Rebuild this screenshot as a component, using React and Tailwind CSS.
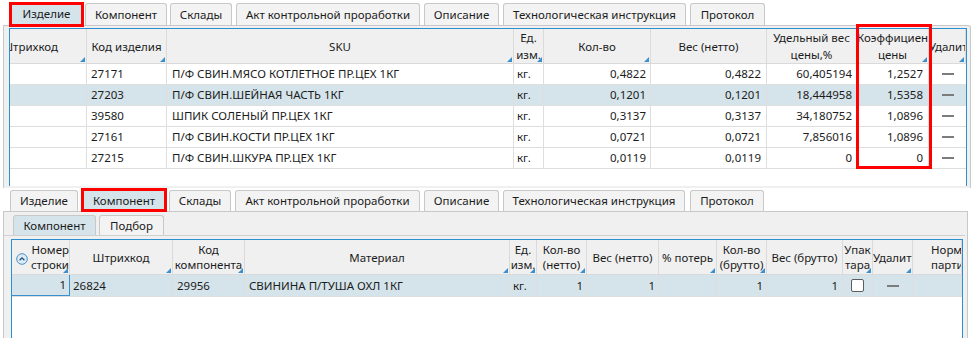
import React from 'react';

const topTabs = [
  { label: 'Изделие', cls: 'ml-[9px] w-[75px] h-[23px]', sel: true },
  { label: 'Компонент', cls: 'ml-[1px] w-[82px] h-[22px]' },
  { label: 'Склады', cls: 'ml-[3px] w-[62px] h-[22px]' },
  { label: 'Акт контрольной проработки', cls: 'ml-[4px] w-[184px] h-[22px]' },
  { label: 'Описание', cls: 'ml-[4px] w-[75px] h-[22px]' },
  { label: 'Технологическая инструкция', cls: 'ml-[4px] w-[183px] h-[22px]' },
  { label: 'Протокол', cls: 'ml-[4px] w-[75px] h-[22px]' },
];

const bottomTabs = [
  { label: 'Изделие', cls: 'ml-[10px] w-[68px] h-[21px]' },
  { label: 'Компонент', cls: 'ml-[3px] w-[86px] h-[22px]', sel: true },
  { label: 'Склады', cls: 'ml-[2px] w-[62px] h-[21px]' },
  { label: 'Акт контрольной проработки', cls: 'ml-[4px] w-[185px] h-[21px]' },
  { label: 'Описание', cls: 'ml-[4px] w-[75px] h-[21px]' },
  { label: 'Технологическая инструкция', cls: 'ml-[4px] w-[182px] h-[21px]' },
  { label: 'Протокол', cls: 'ml-[5px] w-[74px] h-[21px]' },
];

// колонки верхней таблицы
const topCols = [
  { w: 'w-[77px]', lines: ['Штрихкод'], tri: true, hcls: 'justify-end pr-[28px]' },
  { w: 'w-[80px]', lines: ['Код изделия'], tri: true },
  { w: 'w-[347px]', lines: ['SKU'], tri: true },
  { w: 'w-[30px]', lines: ['Ед.', 'изм.'], tri: true },
  { w: 'w-[107px]', lines: ['Кол-во'], tri: true },
  { w: 'w-[116px]', lines: ['Вес (нетто)'] },
  { w: 'w-[90px]', lines: ['Удельный вес', 'цены,%'] },
  { w: 'w-[72px]', lines: ['Коэффициент', 'цены'], tri: true },
  { w: 'w-[37px]', lines: ['Удалить'], tri: true },
];

const topRows = [
  ['27171', 'П/Ф СВИН.МЯСО КОТЛЕТНОЕ ПР.ЦЕХ 1КГ', '0,4822', '0,4822', '60,405194', '1,2527'],
  ['27203', 'П/Ф СВИН.ШЕЙНАЯ ЧАСТЬ 1КГ', '0,1201', '0,1201', '18,444958', '1,5358'],
  ['39580', 'ШПИК СОЛЕНЫЙ ПР.ЦЕХ 1КГ', '0,3137', '0,3137', '34,180752', '1,0896'],
  ['27161', 'П/Ф СВИН.КОСТИ ПР.ЦЕХ 1КГ', '0,0721', '0,0721', '7,856016', '1,0896'],
  ['27215', 'П/Ф СВИН.ШКУРА ПР.ЦЕХ 1КГ', '0,0119', '0,0119', '0', '0'],
];

const botCols = [
  { w: 'w-[58px]', lines: ['Номер', 'строки'], tri: true, sort: true },
  { w: 'w-[103px]', lines: ['Штрихкод'], tri: true },
  { w: 'w-[72px]', lines: ['Код', 'компонента'], tri: true },
  { w: 'w-[265px]', lines: ['Материал'], tri: true },
  { w: 'w-[27px]', lines: ['Ед.', 'изм.'], tri: true },
  { w: 'w-[50px]', lines: ['Кол-во', '(нетто)'], tri: true },
  { w: 'w-[72px]', lines: ['Вес (нетто)'] },
  { w: 'w-[58px]', lines: ['% потерь'], tri: true },
  { w: 'w-[50px]', lines: ['Кол-во', '(брутто)'], tri: true },
  { w: 'w-[76px]', lines: ['Вес (брутто)'] },
  { w: 'w-[30px]', lines: ['Упак', 'тара'], tri: true },
  { w: 'w-[40px]', lines: ['Удалить'], tri: true },
  { w: 'w-[49px]', lines: ['Норматив', 'партии'], hcls: 'justify-start pl-[18px]' },
];

function Tab({ label, cls, sel }) {
  return (
    <div
      className={`${cls} shrink-0 flex items-center justify-center border border-b-0 border-[#c8c8c8] rounded-t-[3px] whitespace-nowrap ${
        sel ? 'bg-[#d5e4ea]' : 'bg-[#f3f3f3]'
      }`}
    >
      {label}
    </div>
  );
}

function Tri() {
  return (
    <svg width="5" height="5" viewBox="0 0 5 5" className="absolute right-[1px] bottom-[1px]">
      <polygon points="5,0 5,5 0,5" fill="#3a8fcf" />
    </svg>
  );
}

function SortIcon() {
  return (
    <svg width="12" height="12" viewBox="0 0 12 12" className="absolute left-[4px] top-[13px]">
      <circle cx="6" cy="6" r="5.3" fill="#dcebf6" stroke="#4b8fc6" strokeWidth="1" />
      <path d="M3.6 7.2 L6 4.8 L8.4 7.2" fill="none" stroke="#1f4f78" strokeWidth="1.3" />
    </svg>
  );
}

function HeadCell({ c, lh }) {
  return (
    <div
      className={`${c.w} relative shrink-0 h-full border-r border-[#dadada] overflow-hidden flex items-center ${
        c.hcls || 'justify-center'
      }`}
    >
      {c.sort && <SortIcon />}
      <div
        className={`${lh} whitespace-nowrap ${c.hcls ? 'shrink-0' : 'w-full'} ${
          c.sort ? 'pl-[16px] text-right' : c.hcls ? 'text-left' : 'text-center'
        }`}
      >
        {c.lines.map((l) => (
          <div key={l}>{l}</div>
        ))}
      </div>
      {c.tri && <Tri />}
    </div>
  );
}

function Minus() {
  return <div className="w-[12px] h-[2px] bg-[#7c7c7c]" />;
}

export default function App() {
  return (
    <div className="w-[976px] h-[338px] overflow-hidden bg-white text-[11.5px] text-[#1c1c1c] font-['Noto_Sans','Liberation_Sans',sans-serif] relative">
      {/* верхняя часть */}
      <div className="h-[25px] flex items-end">
        {topTabs.map((t) => (
          <Tab key={t.label} {...t} />
        ))}
      </div>
      <div className="ml-[3px] w-[968px] h-[163px] border border-b-0 border-[#c8c8c8] rounded-tr-[3px] bg-[#f0f0f0] pt-[2px] pl-[5px]">
        <div className="w-[958px] h-[158px] border border-b-0 border-[#2b8fd0] bg-white overflow-hidden">
          <div className="h-[35px] flex bg-[#f0f0f0] border-b border-[#dadada]">
            {topCols.map((c) => (
              <HeadCell key={c.lines[0]} c={c} lh="leading-[17px]" />
            ))}
          </div>
          {topRows.map((r, i) => (
            <div
              key={r[0]}
              className={`h-[21px] flex border-b border-[#dedede] ${i === 1 ? 'bg-[#d5e4ea]' : ''}`}
            >
              <div className="w-[77px] shrink-0 border-r border-[#dedede]" />
              <div className="w-[80px] shrink-0 border-r border-[#dedede] flex items-center pl-[4px]">{r[0]}</div>
              <div className="w-[347px] shrink-0 border-r border-[#dedede] flex items-center pl-[5px] whitespace-nowrap">{r[1]}</div>
              <div className="w-[30px] shrink-0 border-r border-[#dedede] flex items-center pl-[3px]">кг.</div>
              <div className="w-[107px] shrink-0 border-r border-[#dedede] flex items-center justify-end pr-[4px]">{r[2]}</div>
              <div className="w-[116px] shrink-0 border-r border-[#dedede] flex items-center justify-end pr-[5px]">{r[3]}</div>
              <div className="w-[90px] shrink-0 border-r border-[#dedede] flex items-center justify-end pr-[4px]">{r[4]}</div>
              <div className="w-[72px] shrink-0 border-r border-[#dedede] flex items-center justify-end pr-[5px]">{r[5]}</div>
              <div className="w-[37px] shrink-0 flex items-center justify-center">
                <Minus />
              </div>
            </div>
          ))}
        </div>
      </div>

      {/* нижняя часть */}
      <div className="h-[23px] flex items-end">
        {bottomTabs.map((t) => (
          <Tab key={t.label} {...t} />
        ))}
      </div>
      <div className="ml-[3px] w-[965px] h-[127px] border border-b-0 border-[#c8c8c8] bg-[#f0f0f0]">
        <div className="h-[24px] flex items-end pl-[9px] border-b border-[#d0d0d0] mr-[2px]">
          <Tab label="Компонент" cls="w-[83px] h-[20px]" sel />
          <Tab label="Подбор" cls="ml-[3px] w-[65px] h-[20px]" />
        </div>
        <div className="ml-[7px] mt-[3px] w-[952px] h-[100px] border border-b-0 border-[#2b8fd0] bg-white overflow-hidden">
          <div className="h-[35px] flex bg-[#f0f0f0] border-b border-[#dadada]">
            {botCols.map((c) => (
              <HeadCell key={c.lines[0]} c={c} lh="leading-[15px]" />
            ))}
          </div>
          <div className="h-[22px] flex bg-[#d5e4ea] border-b border-[#dedede]">
            <div className="w-[58px] shrink-0 border-r border-b border-[#3a8fcf] flex items-center justify-end pr-[3px]">1</div>
            <div className="w-[103px] shrink-0 border-r border-[#dedede] flex items-center pl-[3px]">26824</div>
            <div className="w-[72px] shrink-0 border-r border-[#dedede] flex items-center pl-[4px]">29956</div>
            <div className="w-[265px] shrink-0 border-r border-[#dedede] flex items-center pl-[4px] whitespace-nowrap">СВИНИНА П/ТУША ОХЛ 1КГ</div>
            <div className="w-[27px] shrink-0 border-r border-[#dedede] flex items-center pl-[3px]">кг.</div>
            <div className="w-[50px] shrink-0 border-r border-[#dedede] flex items-center justify-end pr-[3px]">1</div>
            <div className="w-[72px] shrink-0 border-r border-[#dedede] flex items-center justify-end pr-[3px]">1</div>
            <div className="w-[58px] shrink-0 border-r border-[#dedede]" />
            <div className="w-[50px] shrink-0 border-r border-[#dedede] flex items-center justify-end pr-[3px]">1</div>
            <div className="w-[76px] shrink-0 border-r border-[#dedede] flex items-center justify-end pr-[4px]">1</div>
            <div className="w-[30px] shrink-0 border-r border-[#dedede] flex items-center justify-center">
              <div className="w-[13px] h-[13px] bg-white border border-[#5c5c5c] rounded-[2px]" />
            </div>
            <div className="w-[40px] shrink-0 border-r border-[#dedede] flex items-center justify-center">
              <Minus />
            </div>
            <div className="w-[49px] shrink-0" />
          </div>
        </div>
      </div>

      {/* красные рамки */}
      <div className="absolute left-[9px] top-[2px] w-[75px] h-[25px] border-[3px] border-[#ff0000] pointer-events-none" />
      <div className="absolute left-[856px] top-[24px] w-[76px] h-[145px] border-[3px] border-[#ff0000] pointer-events-none" />
      <div className="absolute left-[81px] top-[188px] w-[86px] h-[24px] border-[3px] border-[#ff0000] pointer-events-none" />
    </div>
  );
}
